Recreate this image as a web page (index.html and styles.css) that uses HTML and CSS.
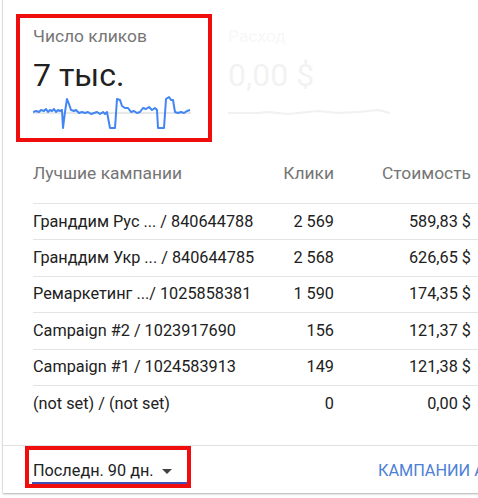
FILE: index.html
```html
<!DOCTYPE html>
<html lang="ru">
<head>
<meta charset="utf-8">
<title>Число кликов</title>
<link rel="stylesheet" href="styles.css">
</head>
<body>
<div class="card">
  <div class="stats">
    <div class="tile tile-active">
      <div class="tile-label">Число кликов</div>
      <div class="tile-value">7 тыс.</div>
      <svg class="spark" width="160" height="36" viewBox="0 0 160 36">
        <line x1="0" y1="18" x2="158" y2="18" stroke="#d0d0d0" stroke-width="1"/>
        <polyline fill="none" stroke="#4285f4" stroke-width="2" stroke-linejoin="round" points="0,17 3,16 6,17 8,15 11,16 13,14 15,17 17,15 19,16 21,14 23,17 25,15 27,16 29,15 30,33 32,17 34,4 36,9 38,15 41,16 43,15 46,18 49,17 52,18 55,17 58,19 61,18 64,17 67,19 70,17 72,19 74,17 77,33 82,33 84,4 87,5 89,11 92,13 95,13 98,17 101,16 104,18 107,17 110,13 113,14 116,12 119,15 122,13 124,15 125,33 131,33 133,4 136,2 138,5 140,5 142,17 145,18 148,17 151,18 154,16 157,15"/>
      </svg>
    </div>
    <div class="tile tile-faded">
      <div class="tile-label">Расход</div>
      <div class="tile-value">0,00 $</div>
      <svg class="spark" width="165" height="36" viewBox="0 0 165 36">
        <polyline fill="none" stroke="#000" stroke-width="2" points="0,18 30,18 40,17 60,19 90,16 110,18 130,17 150,15 162,18"/>
      </svg>
    </div>
  </div>

  <div class="table">
    <div class="row head">
      <div class="c-name">Лучшие кампании</div>
      <div class="c-num">Клики</div>
      <div class="c-num">Стоимость</div>
    </div>
    <div class="row">
      <div class="c-name">Гранддим Рус ... / 840644788</div>
      <div class="c-num">2 569</div>
      <div class="c-num">589,83 $</div>
    </div>
    <div class="row">
      <div class="c-name">Гранддим Укр ... / 840644785</div>
      <div class="c-num">2 568</div>
      <div class="c-num">626,65 $</div>
    </div>
    <div class="row">
      <div class="c-name">Ремаркетинг .../ 1025858381</div>
      <div class="c-num">1 590</div>
      <div class="c-num">174,35 $</div>
    </div>
    <div class="row">
      <div class="c-name">Campaign #2 / 1023917690</div>
      <div class="c-num">156</div>
      <div class="c-num">121,37 $</div>
    </div>
    <div class="row">
      <div class="c-name">Campaign #1 / 1024583913</div>
      <div class="c-num">149</div>
      <div class="c-num">121,38 $</div>
    </div>
    <div class="row last">
      <div class="c-name">(not set) / (not set)</div>
      <div class="c-num">0</div>
      <div class="c-num">0,00 $</div>
    </div>
  </div>

  <div class="footer">
    <div class="mark">
      <div class="dropdown">
        <span>Последн. 90 дн.</span>
        <span class="caret"></span>
      </div>
    </div>
    <div class="link">КАМПАНИИ АККАУНТА</div>
  </div>
</div>
</body>
</html>
```

FILE: styles.css
```css
html, body {
  margin: 0;
  padding: 0;
  background: #ffffff;
  overflow: hidden;
}

body {
  font-family: Roboto, "Noto Sans", "Liberation Sans", sans-serif;
  width: 478px;
  height: 498px;
}

.card {
  margin-left: 3px;
  margin-top: -10px;
  padding-top: 10px;
  width: 640px;
  background: #ffffff;
  box-shadow: 0 1px 2px rgba(0, 0, 0, 0.28), 0 0 1px rgba(0, 0, 0, 0.25);
}

.stats {
  display: flex;
  padding: 14px 0 0 13px;
}

.tile {
  display: flex;
  flex-direction: column;
  flex-shrink: 0;
  padding: 8px 0 7px 13px;
}

.tile-active {
  width: 175px;
  border: 4px solid #f00d0d;
}

.tile-faded {
  padding-top: 12px;
  padding-left: 16px;
  opacity: 0.05;
}

.tile-label {
  font-size: 17.4px;
  line-height: 20px;
  color: #757575;
}

.tile-value {
  margin-top: 10px;
  font-size: 32px;
  line-height: 39px;
  color: #212121;
}

.spark {
  display: block;
}

.table {
  padding: 21px 0 0 30px;
}

.row {
  display: grid;
  grid-template-columns: 231px 70px 137px 1fr;
  align-items: center;
  height: 35.4px;
  border-bottom: 1px solid #e4e4e4;
  font-size: 16.25px;
  line-height: 20px;
  color: #212121;
  white-space: nowrap;
}

.row.head {
  height: 40px;
  align-items: start;
  font-size: 17.4px;
  color: #757575;
}

.row.last {
  border-bottom: none;
}

.c-num {
  text-align: right;
}

.footer {
  display: flex;
  align-items: flex-start;
  margin-top: 23.6px;
  border-top: 1px solid #e0e0e0;
  padding-left: 22px;
  height: 47px;
}

.mark {
  flex-shrink: 0;
  border: 4px solid #f00d0d;
  padding: 11px 0 0 3px;
  width: 155px;
}

.dropdown {
  display: flex;
  align-items: center;
  height: 21px;
  border-bottom: 2px solid #3f51b5;
  padding-left: 1px;
  font-size: 16.25px;
  line-height: 20px;
  color: #212121;
  white-space: nowrap;
}

.caret {
  width: 0;
  height: 0;
  margin-left: 8px;
  margin-top: 1px;
  border-left: 5px solid transparent;
  border-right: 5px solid transparent;
  border-top: 5px solid #424242;
}

.link {
  flex-shrink: 0;
  margin-left: 187px;
  padding-top: 15px;
  font-size: 16.25px;
  line-height: 20px;
  color: #4d80d6;
  white-space: nowrap;
}
```
